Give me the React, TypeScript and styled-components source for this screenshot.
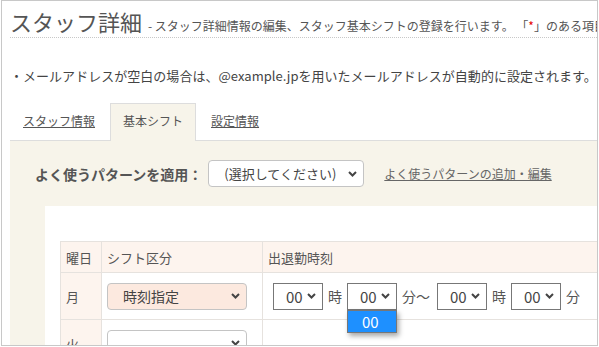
import React from "react";
import styled, { createGlobalStyle } from "styled-components";

const GlobalStyle = createGlobalStyle`
  html, body {
    margin: 0;
    padding: 0;
    background: #fff;
  }
  body {
    font-family: "Noto Sans CJK JP", "Noto Sans", sans-serif;
    color: #555;
  }
`;

const Frame = styled.div`
  box-sizing: border-box;
  width: 597px;
  height: 346px;
  margin-left: 1px;
  border: 1px solid #c8c8c8;
  overflow: hidden;
  background: #fff;
`;

const Header = styled.div`
  display: flex;
  align-items: baseline;
  margin-left: 8px;
  padding-top: 5px;
  border-bottom: 1px dotted #c8c8c8;
  white-space: nowrap;
`;

const Title = styled.h1`
  margin: 0;
  font-size: 22px;
  line-height: 31px;
  font-weight: normal;
  color: #555;
`;

const Sub = styled.span`
  margin-left: 6px;
  font-size: 12px;
  color: #555;
`;

const Req = styled.span`
  color: #e60000;
`;

const Notice = styled.p`
  margin: 28px 0 0 8px;
  font-size: 13px;
  line-height: 20px;
  letter-spacing: 0.03px;
  color: #444;
  white-space: nowrap;
`;

const TabList = styled.div`
  display: flex;
  gap: 2px;
  margin: 17px 0 0 8px;
  border-bottom: 1px solid #ddd;
`;

const Tab = styled.div<{ $active?: boolean }>`
  box-sizing: border-box;
  height: 38px;
  margin-bottom: -1px;
  padding: 0 12px;
  border: 1px solid ${(p) => (p.$active ? "#ddd" : "transparent")};
  border-bottom: none;
  background: ${(p) => (p.$active ? "#f7f4ea" : "transparent")};
  font-size: 12px;
  line-height: 34px;
  color: #555;
  text-decoration: ${(p) => (p.$active ? "none" : "underline")};
`;

const Panel = styled.div`
  margin-left: 8px;
  padding-top: 19px;
  height: 260px;
  background: #f7f4ea;
`;

const Toolbar = styled.div`
  display: flex;
  align-items: center;
  height: 27px;
  margin-left: 25px;
  white-space: nowrap;
`;

const ToolLabel = styled.span`
  margin-right: 6px;
  font-size: 14px;
  font-weight: bold;
  color: #555;
`;

const SelectBox = styled.div<{ $width: number; $size: number; $tone?: string }>`
  box-sizing: border-box;
  display: flex;
  align-items: center;
  width: ${(p) => p.$width}px;
  height: 27px;
  padding: 0 6px 0 15px;
  border: 1px solid #c4c4c4;
  border-radius: 4px;
  background: ${(p) => p.$tone || "#fff"};
  font-size: ${(p) => p.$size}px;
  color: #444;
  white-space: nowrap;
`;

const Chevron = styled.svg`
  flex: none;
  margin-left: auto;
`;

const PatternLink = styled.a`
  margin-left: 20px;
  font-size: 12px;
  color: #666;
  text-decoration: underline;
`;

const WhiteBox = styled.div`
  margin: 19px 0 0 35px;
  padding: 35px 0 0 15px;
  height: 200px;
  background: #fff;
`;

const Table = styled.table`
  border-collapse: collapse;
  table-layout: fixed;
  width: 640px;
`;

const Th = styled.th`
  height: 30px;
  padding: 0 5px;
  border: 1px solid #e6e2de;
  background: #fdf4ee;
  font-size: 13px;
  font-weight: normal;
  text-align: left;
  color: #555;
`;

const Td = styled.td<{ $day?: boolean }>`
  height: 46px;
  padding: 0 5px;
  border: 1px solid #e6e2de;
  background: ${(p) => (p.$day ? "#fdf4ee" : "#fff")};
  font-size: 13px;
  color: #555;
`;

const TimeRow = styled.div`
  display: flex;
  align-items: center;
  gap: 5px;
  margin-left: 5px;
`;

const TimeSelect = styled.div`
  position: relative;
  box-sizing: border-box;
  display: flex;
  align-items: center;
  width: 50px;
  height: 27px;
  padding: 0 6px 0 12px;
  border: 1px solid #777;
  background: #fff;
  font-size: 15px;
  color: #444;
`;

const Unit = styled.span<{ $pad?: number }>`
  font-size: 14px;
  color: #555;
  padding-right: ${(p) => p.$pad || 0}px;
`;

const DropList = styled.div`
  position: absolute;
  top: calc(100% + 1px);
  left: -1px;
  box-sizing: border-box;
  width: 50px;
  height: 23px;
  padding-left: 14px;
  border: 1px solid #777;
  background: #1e90ff;
  color: #fff;
  font-size: 15px;
  line-height: 21px;
  box-shadow: 2px 3px 5px rgba(0, 0, 0, 0.35);
`;

function Arrow() {
  return (
    <Chevron width="9" height="6" viewBox="0 0 9 6">
      <path d="M1 1 L4.5 4.5 L8 1" fill="none" stroke="#444" strokeWidth="2" />
    </Chevron>
  );
}

function Time({ open }: { open?: boolean }) {
  return (
    <TimeSelect>
      00
      <Arrow />
      {open && <DropList>00</DropList>}
    </TimeSelect>
  );
}

function App() {
  return (
    <>
      <GlobalStyle />
      <Frame>
        <Header>
          <Title>スタッフ詳細</Title>
          <Sub>
            - スタッフ詳細情報の編集、スタッフ基本シフトの登録を行います。 「<Req>*</Req>」のある項目は必須です。
          </Sub>
        </Header>

        <Notice>
          ・メールアドレスが空白の場合は、@example.jpを用いたメールアドレスが自動的に設定されます。
        </Notice>

        <TabList>
          <Tab>スタッフ情報</Tab>
          <Tab $active>基本シフト</Tab>
          <Tab>設定情報</Tab>
        </TabList>

        <Panel>
          <Toolbar>
            <ToolLabel>よく使うパターンを適用：</ToolLabel>
            <SelectBox $width={156} $size={13}>
              (選択してください)
              <Arrow />
            </SelectBox>
            <PatternLink>よく使うパターンの追加・編集</PatternLink>
          </Toolbar>

          <WhiteBox>
            <Table>
              <colgroup>
                <col style={{ width: 41 }} />
                <col style={{ width: 161 }} />
                <col />
              </colgroup>
              <thead>
                <tr>
                  <Th>曜日</Th>
                  <Th>シフト区分</Th>
                  <Th>出退勤時刻</Th>
                </tr>
              </thead>
              <tbody>
                <tr>
                  <Td $day>月</Td>
                  <Td>
                    <SelectBox $width={140} $size={14} $tone="#fce9df">
                      時刻指定
                      <Arrow />
                    </SelectBox>
                  </Td>
                  <Td>
                    <TimeRow>
                      <Time />
                      <Unit>時</Unit>
                      <Time open />
                      <Unit $pad={2}>分～</Unit>
                      <Time />
                      <Unit>時</Unit>
                      <Time />
                      <Unit>分</Unit>
                    </TimeRow>
                  </Td>
                </tr>
                <tr>
                  <Td $day>火</Td>
                  <Td>
                    <SelectBox $width={140} $size={14}>
                      -
                      <Arrow />
                    </SelectBox>
                  </Td>
                  <Td>-</Td>
                </tr>
              </tbody>
            </Table>
          </WhiteBox>
        </Panel>
      </Frame>
    </>
  );
}

export default App;
